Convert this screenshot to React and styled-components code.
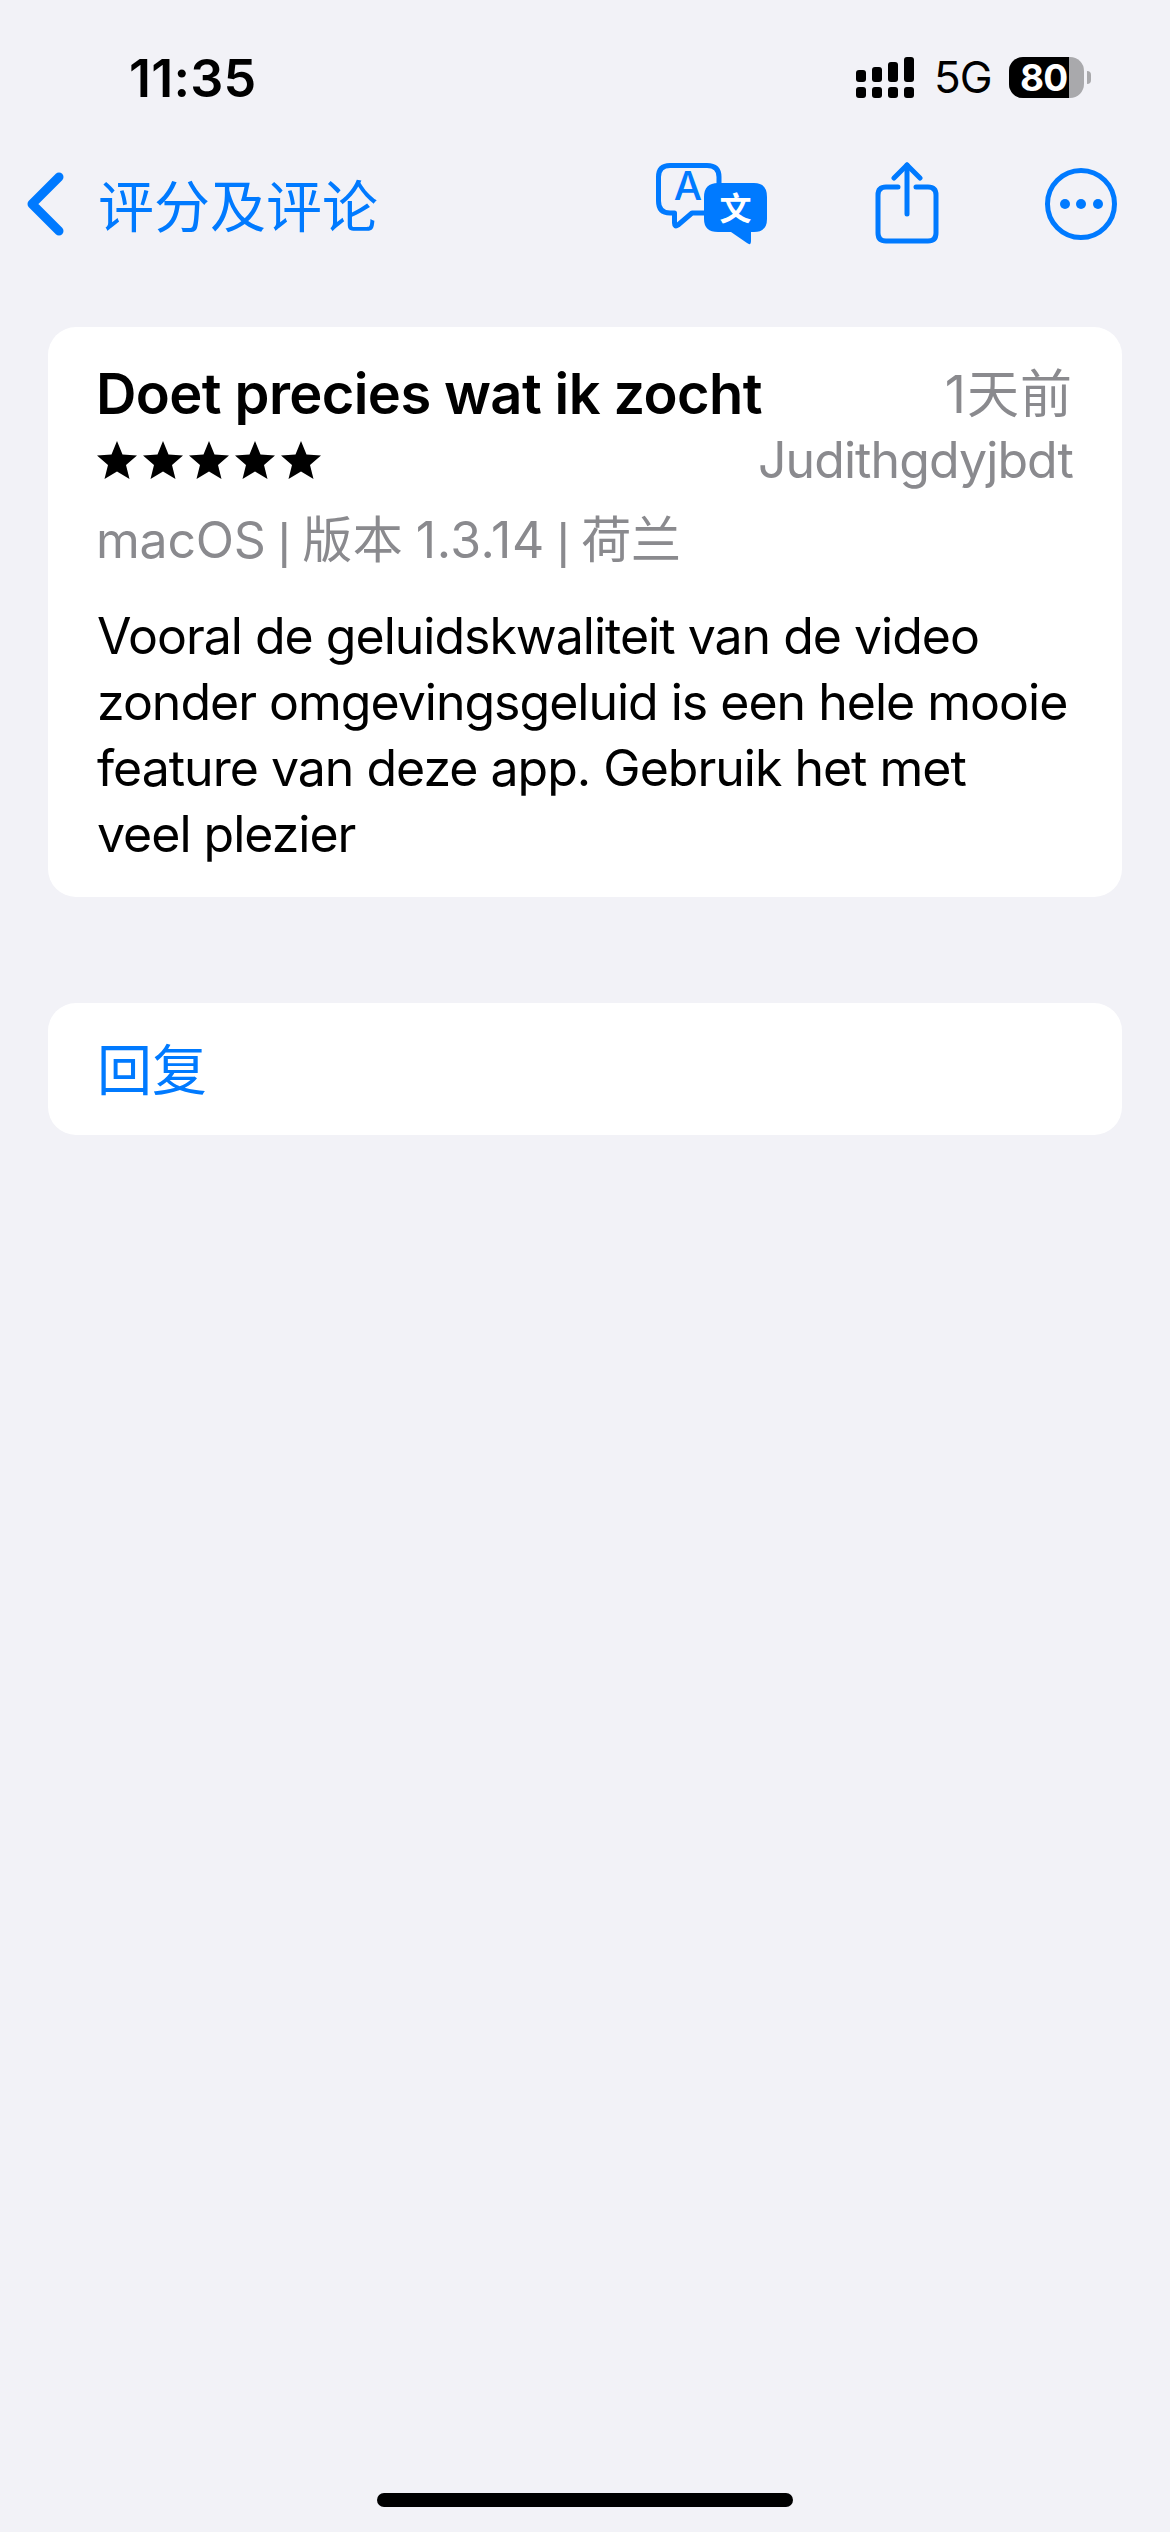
import React from "react";
import styled, { createGlobalStyle } from "styled-components";

const BLUE = "#007AFF";
const GREY = "#8A8A8E";
const FONT = `Inter, "Noto Sans CJK SC", sans-serif`;

const Global = createGlobalStyle`
  html, body { margin: 0; padding: 0; background: #F2F2F7; }
  * { box-sizing: border-box; }
`;

const Page = styled.div`
  width: 1170px;
  height: 2532px;
  background: #F2F2F7;
  font-family: ${FONT};
  display: flex;
  flex-direction: column;
  overflow: hidden;
`;

const StatusBar = styled.header`
  height: 156px;
  padding: 52px 79px 0 129px;
  display: flex;
  justify-content: space-between;
  align-items: flex-start;
`;

const Time = styled.div`
  font-size: 52px;
  line-height: 54px;
  font-weight: 600;
  letter-spacing: 0.2px;
  color: #000;
`;

const StatusIcons = styled.div`
  display: flex;
  align-items: flex-start;
  padding-top: 5px;
`;

const Signal = styled.svg`
  width: 58px;
  height: 41px;
  display: block;
  fill: #000;
`;

const Network = styled.div`
  margin-left: 20px;
  width: 54px;
  font-size: 44px;
  line-height: 44px;
  font-weight: 400;
  letter-spacing: -0.9px;
  color: #000;
  margin-top: -2px;
`;

const Battery = styled.div`
  margin-left: 21px;
  width: 75px;
  height: 41px;
  border-radius: 14px;
  display: flex;
  background: #A9A9AC;
`;

const BatteryLevel = styled.div`
  width: 60px;
  height: 41px;
  border-radius: 14px 0 0 14px;
  background: #000;
  color: #fff;
  font-size: 37px;
  line-height: 41px;
  font-weight: 700;
  padding-left: 11px;
  letter-spacing: -0.8px;
  white-space: nowrap;
`;

const BatteryNub = styled.div`
  width: 4px;
  height: 13px;
  margin: 14px 0 0 3px;
  background: #A9A9AC;
  border-radius: 0 6px 6px 0;
`;

const NavBar = styled.nav`
  height: 96px;
  display: flex;
  align-items: center;
  padding-left: 26px;
`;

const BackIcon = styled.svg`
  width: 40px;
  height: 66px;
  display: block;
  fill: none;
  stroke: ${BLUE};
  stroke-width: 9;
  stroke-linecap: round;
  stroke-linejoin: round;
`;

const BackLabel = styled.div`
  margin-left: 32px;
  font-size: 56px;
  line-height: 66px;
  color: ${BLUE};
  font-family: "Noto Sans CJK SC", sans-serif;
  font-weight: 400;
  margin-top: -3px;
`;

const NavActions = styled.div`
  margin-left: auto;
  display: flex;
  align-items: center;
`;

const TranslateIcon = styled.svg`
  width: 112px;
  height: 82px;
  display: block;
  margin-right: 106px;
  overflow: visible;
`;

const ShareIcon = styled.svg`
  width: 66px;
  height: 84px;
  display: block;
  margin-right: 104px;
  fill: none;
  stroke: ${BLUE};
  stroke-width: 5;
  stroke-linecap: round;
  stroke-linejoin: round;
`;

const MoreIcon = styled.svg`
  width: 74px;
  height: 74px;
  display: block;
  margin-right: 52px;
`;

const Content = styled.main`
  padding: 75px 48px 0;
  display: flex;
  flex-direction: column;
  gap: 106px;
`;

const Card = styled.section`
  background: #fff;
  border-radius: 28px;
`;

const ReviewCard = styled(Card)`
  height: 570px;
  padding: 34px 49px 0 48px;
`;

const HeaderGrid = styled.div`
  display: flex;
  justify-content: space-between;
`;

const HeaderLeft = styled.div`
  display: flex;
  flex-direction: column;
  margin-right: -12px;
`;

const HeaderRight = styled.div`
  display: flex;
  flex-direction: column;
  align-items: flex-end;
  padding-top: 2px;
  color: ${GREY};
`;

const Title = styled.h1`
  margin: 0;
  font-size: 56px;
  line-height: 66px;
  font-weight: 600;
  letter-spacing: -0.6px;
  color: #000;
  white-space: nowrap;
`;

const Stars = styled.div`
  display: flex;
  gap: 6px;
  margin: 14px 0 0 1px;
`;

const Star = styled.svg`
  width: 40px;
  height: 38px;
  display: block;
  fill: #000;
`;

const DateText = styled.div`
  font-size: 52px;
  line-height: 64px;
  letter-spacing: 1px;
`;

const Author = styled.div`
  font-size: 50px;
  line-height: 66px;
  letter-spacing: -0.9px;
`;

const Meta = styled.div`
  margin-top: 14px;
  font-size: 50px;
  line-height: 66px;
  letter-spacing: -0.2px;
  word-spacing: -2px;
  color: ${GREY};
`;

const Pipe = styled.span`
  font-family: "Liberation Sans", sans-serif;
  font-weight: 400;
`;

const Version = styled.span`
  letter-spacing: 0.5px;
`;

const Body = styled.p`
  margin: 29px 0 0 1px;
  font-size: 50px;
  line-height: 66px;
  letter-spacing: -1px;
  color: #000;
`;

const ReplyCard = styled(Card)`
  height: 132px;
  padding: 0 49px;
  display: flex;
  align-items: center;
`;

const ReplyLabel = styled.div`
  font-size: 55px;
  line-height: 66px;
  color: ${BLUE};
  font-family: "Noto Sans CJK SC", sans-serif;
  margin-top: -7px;
`;

const HomeBar = styled.div`
  margin: auto auto 25px;
  width: 416px;
  height: 14px;
  border-radius: 7px;
  background: #000;
`;

const STAR = "M20 0 L25.500 13.500 L40 14.500 L29 24 L32.500 38 L20 30.500 L7.500 38 L11 24 L0 14.500 L14.500 13.500 Z";

export default function App() {
  return (
    <Page>
      <Global />
      <StatusBar>
        <Time>11:35</Time>
        <StatusIcons>
          <Signal viewBox="0 0 58 41">
            <rect x="0" y="13" width="10" height="12" rx="3" />
            <rect x="16" y="10" width="10" height="15" rx="3" />
            <rect x="32" y="5" width="10" height="20" rx="3" />
            <rect x="48" y="0" width="10" height="25" rx="3" />
            <rect x="0" y="30" width="10" height="11" rx="3" />
            <rect x="16" y="30" width="10" height="11" rx="3" />
            <rect x="32" y="30" width="10" height="11" rx="3" />
            <rect x="48" y="30" width="10" height="11" rx="3" />
          </Signal>
          <Network>5G</Network>
          <Battery>
            <BatteryLevel>80</BatteryLevel>
          </Battery>
          <BatteryNub />
        </StatusIcons>
      </StatusBar>
      <NavBar>
        <BackIcon viewBox="0 0 40 66">
          <path d="M33 6 L6 33 L33 60" />
        </BackIcon>
        <BackLabel>评分及评论</BackLabel>
        <NavActions>
          <TranslateIcon viewBox="0 0 112 82">
            <path
              d="M14 2.500 H51 Q63 2.500 63 14 V40 Q63 50 51 50 H36 L22 62 Q18.500 64.500 18.500 60 V50 H14 Q2.500 50 2.500 38 V14 Q2.500 2.500 14 2.500 Z"
              fill="none"
              stroke={BLUE}
              strokeWidth="5"
              strokeLinejoin="round"
            />
            <text x="32" y="37" textAnchor="middle" fontFamily="Inter, sans-serif" fontSize="40" fontWeight="500" fill={BLUE}>A</text>
            <path
              d="M62 20 H98 Q111 20 111 34 V56 Q111 69 98 69 H95 V78 Q95 83 91 80 L75 69 H62 Q48 69 48 56 V34 Q48 20 62 20 Z"
              fill={BLUE}
            />
            <text x="79.500" y="57" textAnchor="middle" fontFamily="'Noto Sans CJK SC', sans-serif" fontSize="32" fontWeight="700" fill="#fff">文</text>
          </TranslateIcon>
          <ShareIcon viewBox="0 0 66 84">
            <path d="M24 25 H12 Q4 25 4 33 V71 Q4 79 12 79 H54 Q62 79 62 71 V33 Q62 25 54 25 H42" />
            <path d="M33 52 V3" />
            <path d="M20 16 L33 3 L46 16" />
          </ShareIcon>
          <MoreIcon viewBox="0 0 74 74">
            <circle cx="37" cy="37" r="33.500" fill="none" stroke={BLUE} strokeWidth="5" />
            <circle cx="21" cy="37" r="5" fill={BLUE} />
            <circle cx="37" cy="37" r="5" fill={BLUE} />
            <circle cx="54" cy="37" r="5" fill={BLUE} />
          </MoreIcon>
        </NavActions>
      </NavBar>
      <Content>
        <ReviewCard>
          <HeaderGrid>
            <HeaderLeft>
              <Title>Doet precies wat ik zocht</Title>
              <Stars>
                {[0, 1, 2, 3, 4].map((i) => (
                  <Star key={i} viewBox="0 0 40 38">
                    <path d={STAR} />
                  </Star>
                ))}
              </Stars>
            </HeaderLeft>
            <HeaderRight>
              <DateText>1天前</DateText>
              <Author>Judithgdyjbdt</Author>
            </HeaderRight>
          </HeaderGrid>
          <Meta>
            macOS <Pipe>|</Pipe> <Version>版本 1.3.14</Version> <Pipe>|</Pipe> 荷兰
          </Meta>
          <Body>
            Vooral de geluidskwaliteit van de video zonder omgevingsgeluid is een hele mooie feature van deze app. Gebruik het met
            <br />
            veel plezier
          </Body>
        </ReviewCard>
        <ReplyCard>
          <ReplyLabel>回复</ReplyLabel>
        </ReplyCard>
      </Content>
      <HomeBar />
    </Page>
  );
}
